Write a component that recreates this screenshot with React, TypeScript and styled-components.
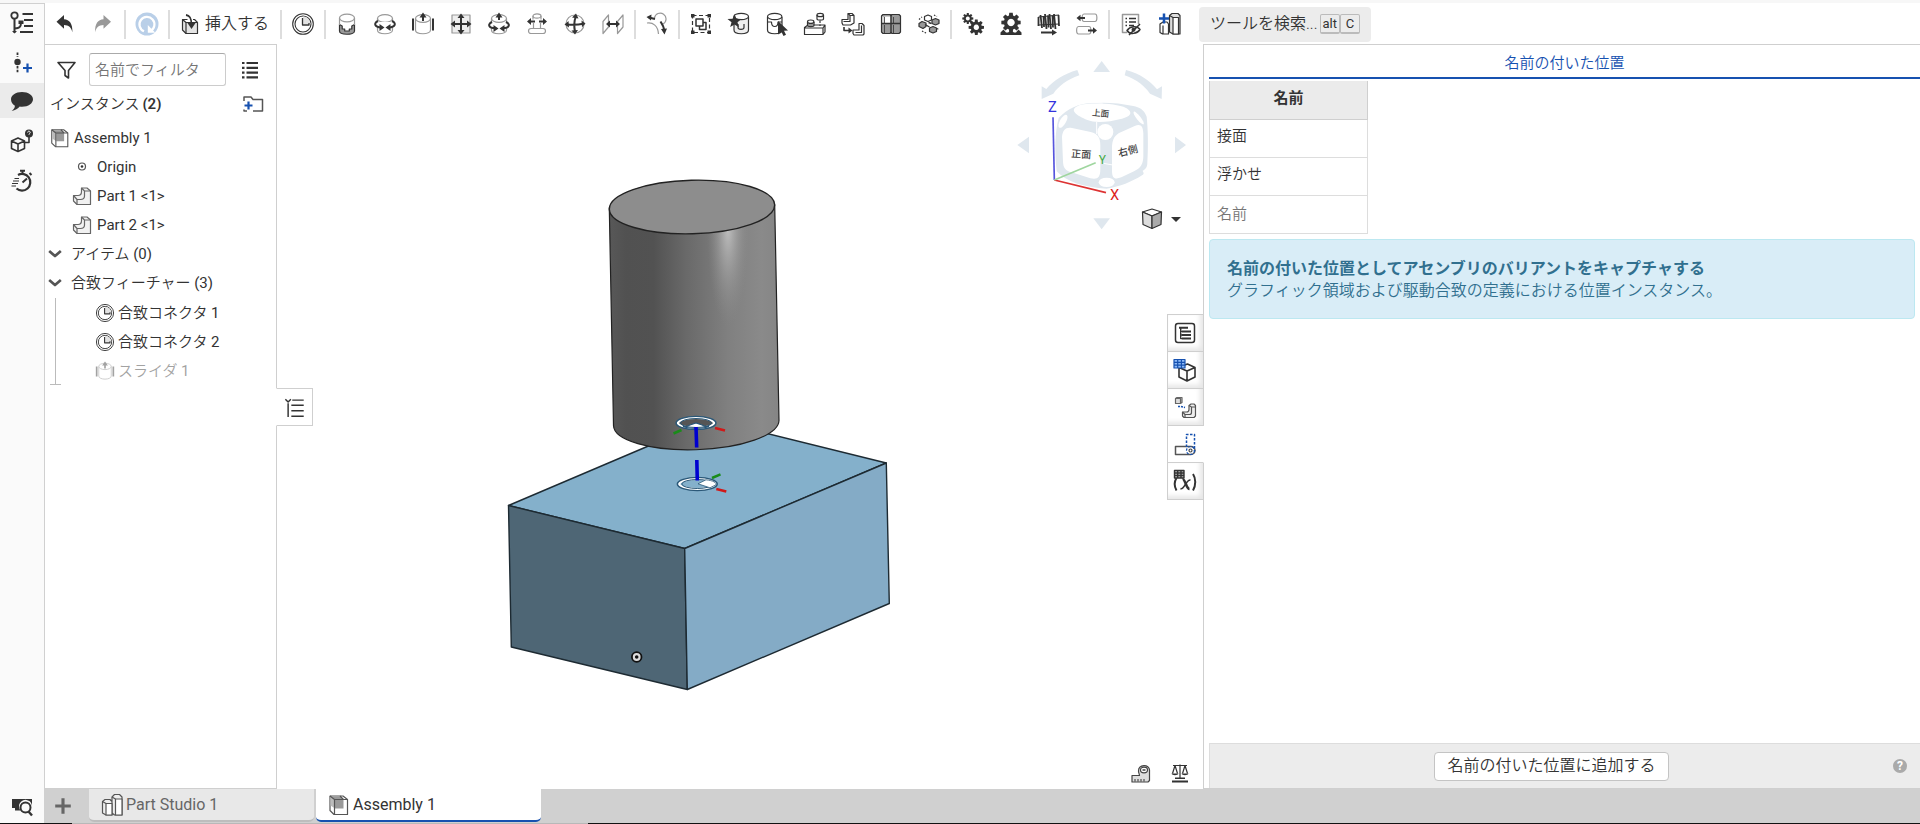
import React from "react";
import styled, { createGlobalStyle, css } from "styled-components";

const GlobalStyle = createGlobalStyle`
  *, *::before, *::after { box-sizing: border-box; }
  body {
    margin: 0;
    background: #fff;
    color: #333;
    font-family: Roboto, "Noto Sans CJK JP", sans-serif;
    font-size: 15px;
    font-weight: 350;
    line-height: 20px;
  }
  button, input { font: inherit; color: inherit; }
  button { background: none; border: 0; padding: 0; cursor: pointer; }
  h1, h2, p, ul { margin: 0; padding: 0; font: inherit; list-style: none; }
  svg { display: block; flex: none; }
`;

/* ---------- icons ---------- */

type Draw = React.ReactNode;

const Svg = styled.svg<{ $size?: number }>`
  width: ${(p) => p.$size ?? 24}px;
  height: ${(p) => p.$size ?? 24}px;
  fill: none;
  stroke: currentColor;
  stroke-width: 1.2;
  stroke-linejoin: round;
`;

const Icon = ({ draw, size }: { draw: Draw; size?: number }) => (
  <Svg viewBox="0 0 24 24" $size={size} aria-hidden="true">
    {draw}
  </Svg>
);

const solid = { fill: "currentColor", stroke: "none" };
const pale = { stroke: "#999" };

const cylinder = (
  <g {...pale}>
    <ellipse cx="12" cy="6.5" rx="7.5" ry="3.8" />
    <path d="M4.5 6.5V18c0 5 15 5 15 0V6.5" />
  </g>
);

const gearPath = (n: number, cx: number, cy: number, ro: number, ri: number) => {
  const pts: string[] = [];
  for (let i = 0; i < n; i++) {
    const a = (i / n) * Math.PI * 2;
    const w = Math.PI / n;
    [[-0.75, ri], [-0.45, ro], [0.45, ro], [0.75, ri]].forEach(([k, r]) => {
      pts.push(`${(cx + Math.sin(a + k * w) * r).toFixed(2)} ${(cy - Math.cos(a + k * w) * r).toFixed(2)}`);
    });
  }
  return `M${pts.join("L")}Z`;
};

const icons: Record<string, Draw> = {
  undo: <path {...solid} d="M3.5 9.8 11 3v4.2c5.5.3 8.700 4.300 8.400 13-1.200-4.800-3.700-7-8.400-7.200V16.800Z" />,
  redo: <path fill="#999" stroke="none" d="M20 9.8 12.5 3v4.2c-5.5.3-8.700 4.300-8.400 13 1.200-4.800 3.700-7 8.400-7.200v3.800Z" />,
  update: (
    <>
      <circle cx="12" cy="12" r="11.5" fill="#b9cfe8" stroke="none" />
      <path stroke="#fff" strokeWidth="2.2" d="M9 19.3A7.5 7.5 0 1 1 15.5 19" />
      <path fill="#fff" stroke="none" d="M12.8 13v7.8h7.5Z" />
    </>
  ),
  insert: (
    <>
      <path fill="#e4e4e4" d="M4.5 7.5 8 10.5h11.5v11H8L4.5 18Z" />
      <path d="M4.5 7.5h5M8 10.5v11M15 7.5h1.5l3 3" />
      <path strokeWidth="1.8" d="M8 3c4 .5 5.5 3 5.5 10" />
      <path {...solid} d="M9.5 11h8l-4 6Z" />
    </>
  ),
  connector: (
    <>
      <circle cx="12" cy="12" r="10.3" strokeWidth="1.1" />
      <circle cx="12" cy="12" r="8" strokeWidth="1.1" />
      <path fill="#e2e2e2" stroke="none" d="M12 4.5V12h7.5A7.5 7.5 0 0 0 12 4.5Z" />
      <path d="M11.5 6v7H18v-2" strokeWidth="1.3" />
    </>
  ),
  fastened: (
    <>
      <path fill="#999" d="M4.5 12.5V19c0 4.3 15 4.3 15 0v-6.5L16.8 14v3h-2.5v2H9.7v-2H7.2v-3Z" />
      <ellipse cx="12" cy="6" rx="7.5" ry="3.8" {...pale} />
      <path {...pale} d="M4.5 6v7M19.5 6v7" />
    </>
  ),
  revolute: (
    <>
      {cylinder}
      <path fill="#fff" stroke="none" d="M3 10h18v5H3z" />
      <path strokeWidth="2" d="M5 9C0 11.5 2 15 8 15.5M19 9c5 2.5 3 6-3 6.5" />
      <path {...solid} d="m6.5 12 5 3.5-5 3.5ZM17.5 12l-5 3.5 5 3.5Z" />
    </>
  ),
  slider: (
    <>
      {cylinder}
      <path strokeWidth="2" d="M2 6.5v12M22 6.5v12M12 9V4" />
      <path {...solid} d="m8.5 5.5 3.5-5 3.5 5Z" />
    </>
  ),
  planar: (
    <>
      <path {...pale} fill="#eee" d="M3 3h18v18H3z" />
      <path strokeWidth="2" d="M12 4v16M4 12h16" />
      <path {...solid} d="M8.5 6 12 1.5 15.5 6ZM8.5 18l3.5 4.5 3.5-4.5ZM6 8.5 1.5 12 6 15.5ZM18 8.5l4.5 3.5-4.5 3.5Z" />
    </>
  ),
  cylindrical: (
    <>
      {cylinder}
      <path fill="#fff" stroke="none" d="M3 11h18v5H3z" />
      <path strokeWidth="2" d="M5 10C0 12.5 2 16 8 16M19 10c5 2.5 3 6-3 6M12 8V4" />
      <path {...solid} d="m6.5 13 5 3.5-5 3.5ZM17.5 13l-5 3.5 5 3.5ZM8.5 5.5l3.5-5 3.5 5Z" />
    </>
  ),
  pinSlot: (
    <>
      <g {...pale}>
        <ellipse cx="12" cy="4" rx="4" ry="2.2" />
        <path d="M8 4v3.5M16 4v3.5M8.5 11v5M15.5 11v5" />
        <rect x="3.5" y="16.5" width="17" height="5" rx="2.5" />
      </g>
      <path strokeWidth="2" d="M5 9.5h5M14 9.5h5" />
      <path {...solid} d="M6 6 2 9.5 6 13ZM18 6l4 3.5-4 3.5Z" />
    </>
  ),
  ball: (
    <>
      <circle cx="12" cy="12" r="9" {...pale} />
      <path strokeWidth="2" d="M13 4c-2 5-2 11-1 16M4 12.5c6 .5 11 .5 16-.8" />
      <path {...solid} d="m9 5.5 4-4 2.5 5ZM8.5 18.5l3.5 4 3-4.5ZM5.500 9 1.500 12.500l4.500 3ZM18.500 8.500l4 3-3.500 3.800Z" />
    </>
  ),
  parallel: (
    <>
      <path {...pale} d="M2 9.5 7.5 3v12L2 21.5ZM16.5 9.5 22 3v12l-5.500 6.500Z" />
      <path strokeWidth="2" d="M7 12h10" />
      <path {...solid} d="m9 8.5-4 3.5 4 3.5ZM15 8.5l4 3.5-4 3.5Z" />
    </>
  ),
  tangent: (
    <>
      <path {...pale} d="M2 11c6-1 11 3 11.5 11M9.5 6a5.8 5.8 0 1 1 8.5 6" />
      <path strokeWidth="2" d="M4 5.5 10 7M15.5 9.5c2 3 3.5 6 3.700 9" />
      <path {...solid} d="M6.5 2.5 1.5 5 6 8.5ZM16 17l6-.5-2.5 6Z" />
    </>
  ),
  group: (
    <>
      <path strokeDasharray="4 2.5" d="M3.5 3.5h17v17h-17z" />
      <path {...solid} d="M2 2h3.5v3.5H2zM18.5 2H22v3.5h-3.5zM2 18.5h3.5V22H2zM18.5 18.5H22V22h-3.5z" />
      <path strokeWidth="1.5" d="M7 7h7v7H7zM10.5 14v3.5H17v-7h-3" />
    </>
  ),
  mate: (
    <>
      <path fill="#eee" d="M7 5v13c0 5 14.5 5 14.5 0V5" />
      <ellipse cx="14.2" cy="4.5" rx="7.3" ry="3.2" fill="#fff" />
      <path d="M11 12v3.5c0 2.5 6 2.5 6 0V12" />
      <path {...solid} d="m7.500 2 1.900 4.800 5.100.3-4 3.200 1.400 5-4.400-2.900L3.200 15l1.300-4.800-4-3.100 5.100-.3Z" />
    </>
  ),
  selectMate: (
    <>
      <path d="M2.5 5v13c0 5 14.5 5 14.5 0V5" />
      <ellipse cx="9.7" cy="4.5" rx="7.2" ry="3.2" />
      <path d="M2.5 10h4c0 6 6.5 6 6.5 0h4" />
      <path {...solid} d="m13 9 10 9.5-4 .2 2 4-2.5 1.2-2-4L13 22.5Z" />
    </>
  ),
  replicate: (
    <>
      <path d="M1.5 15.5 5 13h17v7l-2 2.5H1.5ZM1.5 16H20l2-3M20 16v6" />
      <path d="M4.5 10v3.5c0 1.5 6.5 1.5 6.500 0V10M14 3v4c0 1.500 6.500 1.500 6.500 0V3" />
      <ellipse cx="7.7" cy="9.7" rx="3.2" ry="1.7" />
      <ellipse cx="17.2" cy="3" rx="3.2" ry="1.7" />
      <path strokeDasharray="2 1.5" d="M17 9v5" />
    </>
  ),
  pattern: (
    <>
      <path fill="#fff" d="M7 1.5h4l2 2V11L9.5 13H2L1 11V7.5h6Z" />
      <path d="M9 3.5v6H2.5M7 1.5l2 2h4M18 11.5h3l2 2V22l-1 1H13l-1-1.5V18h6Z" />
      <path d="M20.5 13.5v7h-6" />
      <path strokeWidth="1.6" d="M3 15v3.5h5" />
      <path {...solid} d="m7.5 15.5 4 3-4 3Z" />
    </>
  ),
  linearPattern: (
    <>
      <path fill="#999" d="M4 2.5h7l1 1 1-1h7L21.5 4v16L20 21.5h-7l-1-1-1 1H4L2.5 20V4Z" />
      <path fill="#fff" stroke="none" d="M5.5 4.5h6V11h-6Z" />
      <path fill="#ddd" stroke="none" d="M3.2 4.3 5.5 5v6H3.2Z" />
      <path strokeWidth="1.4" d="M12 3v18M2.5 11.5h19" />
      <path strokeWidth="0.8" d="M5.5 5v6M5.5 13v8M14.5 5v6M14.5 13v8" />
    </>
  ),
  circularPattern: (
    <>
      <path fill="#999" d="m2 11.5 3-2L9 11v3.500l-3 2-4-2ZM15 8l3.500-1.500L22 8v3.500L18.500 13 15 11.500ZM12.500 16l3.500-1.500 3.500 1.500v3.500L16 21l-3.500-1.500Z" />
      <path fill="#fff" d="M7.5 4.5 11 3l3.5 1.5V8L11 9.5 7.5 8Z" />
      <path d="m8 12.5 4.500 2.500M11.500 10.500l3 1" strokeWidth="1.4" />
      <path strokeDasharray="1.5 1.5" d="M2 7.5 5 5M5 19l5 2.5M17 3l3 1.5M20 16.5l2 1" />
    </>
  ),
  gears: (
    <>
      <path {...solid} fillRule="evenodd" d={`${gearPath(8, 6.8, 6.5, 5.6, 3.9)}M6.8 4.5a2 2 0 1 0 .01 0Z`} />
      <path {...solid} fillRule="evenodd" d={`${gearPath(8, 15.3, 15.3, 7.8, 5.6)}M15.3 12.6a2.700 2.700 0 1 0 .01 0Z`} />
    </>
  ),
  rack: (
    <>
      <path {...solid} fillRule="evenodd" d={`${gearPath(8, 12, 10.5, 9.8, 7.2)}M12 6.8a3.700 3.700 0 1 0 .01 0Z`} />
      <path {...solid} d="M1.5 23v-2.5l3-3 2.5 3h2l3-2 3 2h2l2.5-3 3 3V23Z" />
    </>
  ),
  screw: (
    <>
      <path strokeWidth="1.8" d="M3.5 3 5 16M8 2l1.5 15M12.5 2 14 17M17 2l1.5 15M21.5 3 22 14M1.5 5v9M6.5 4 7 15M11 3.5l.5 12M15.5 3.5l.5 12" />
      <path strokeWidth="1.2" d="M1.5 5 22 3M1.5 13 22 12" />
      <path strokeWidth="2" d="M4 20.5h12" />
      <path {...solid} d="m15 17.5 5 3-5 3Z" />
    </>
  ),
  linear: (
    <>
      <path {...pale} d="M9 2h11c2.5 0 2.500 7.500 0 7.500H9M9 2C6.500 2 6.500 9.500 9 9.500M3.500 14.500H14M3.500 14.500c-2.500 0-2.500 7.500 0 7.500H14M14 14.500c2.500 0 2.500 7.500 0 7.500" />
      <path strokeWidth="2" d="M4 6h6M13 18.5h6" />
      <path {...solid} d="M5.5 2.800 1.500 6l4 3.200ZM18 15.300l4 3.200-4 3.200Z" />
    </>
  ),
  configList: (
    <>
      <path {...pale} strokeWidth="1.5" d="M8 20.5H3.5v-18h16V12" />
      <path strokeWidth="1.5" d="M6.5 6.5H8M10 6.5h7M6.5 10H8M10 10h7M6.5 13.5H8M10 13.5h5" />
      <path d="M8 18.5c3-4.5 10-5 13-1-3 4.5-10 5.5-13 1ZM21 12 10 23" strokeWidth="1.5" />
      <circle cx="14.5" cy="17.8" r="2" {...solid} />
    </>
  ),
  addParts: (
    <>
      <path fill="#ddd" d="M12.5 3.5 15 1.5h6l2 2V22h-7l-3.5-2Z" />
      <path fill="#fff" d="M16 5.5h5.5V22H16Z" />
      <path d="M12.5 3.5 16 5.5M3 12l3-2h4l1.5 2v10h-6L3 20.500ZM6 13.500V22" />
      <path stroke="#1651b0" strokeWidth="2.5" d="M7 1.5v10M2 6.5h10" />
    </>
  ),
  tree: (
    <>
      <circle cx="4.5" cy="4.5" r="3.2" strokeWidth="1.8" />
      <path strokeWidth="2" d="M4.5 8v13.5M5 17.5c5 0 6-2 6-6" />
      <path {...solid} d="m2 20 2.5 2.5L7 20ZM8.5 9.500h5V13h-5Z" />
      <path strokeWidth="2" d="M12.5 3H23M14 9h9M14 15h9M10 21h13" />
    </>
  ),
  addFeature: (
    <>
      <path strokeWidth="1.8" strokeDasharray="2.5 1.2" d="M7.5 1.5V6M7.5 15v6.5" />
      <circle cx="7.5" cy="11" r="3.2" {...solid} />
      <path stroke="#1651b0" strokeWidth="2.2" d="M17.5 12.5v9M13 17h9" />
    </>
  ),
  comment: <path {...solid} d="M12 3c6.500 0 11 3.300 11 7.300s-4.500 7.500-11 7.500c-.8 0-1.600 0-2.300-.2-1.600 2.200-4.500 3.900-8 4.300 2-1.500 3.200-3.200 3.200-5.200C2.500 15.200 1 13 1 10.300 1 6.300 5.500 3 12 3Z" />,
  boxHelp: (
    <>
      <path strokeWidth="1.6" d="m1.5 12 6.500-3 6.500 3v7.500L8 22.500l-6.500-3ZM1.500 12 8 15l6.500-3M8 15v7.500" />
      <circle cx="19" cy="4.5" r="4" {...solid} />
      <path strokeWidth="1.6" d="M19 8v5.5h-4" />
      <path stroke="#fff" strokeWidth="1" d="M17.7 3.500c0-2 2.800-1.500 2.500.2-.2.8-1.200.8-1.200 2" />
    </>
  ),
  stopwatch: (
    <>
      <path strokeWidth="2.2" d="M8 6a8.3 8.3 0 1 1-1.5 13.5" />
      <path strokeWidth="2" d="M10 1.8h5M12.5 2v3M19.5 4l2 2M12.5 13.5 17 9.5" />
      <path strokeWidth="1.2" d="M4.5 9.5H9M3 12h6M2 14.5h6M1.5 17H6" />
    </>
  ),
  searchTab: (
    <>
      <path {...solid} d="M2 5h20v7.5a6.5 6.5 0 1 0-11.500 4H5V14H2Z" />
      <circle cx="15.5" cy="13.5" r="5" strokeWidth="2" />
      <path strokeWidth="2.4" d="m18.5 17.5 3.5 4" />
    </>
  ),
  filter: <path strokeWidth="1.6" d="M4 4.5h17l-6.5 8V20L11 17.5v-5Z" />,
  list: (
    <>
      <path strokeWidth="2.2" d="M8.5 5H20M8.5 9.8H20M8.5 14.6H20M8.5 19.4H20" />
      <path strokeWidth="2.2" d="M4 5h2.5M4 9.8h2.5M4 14.6h2.500M4 19.4h2.500" />
    </>
  ),
  addFolder: (
    <>
      <path strokeWidth="1.5" d="M3 9V5h7l2 2.5h9.5V19H12M3 17.5V19h3" stroke="#555" />
      <path stroke="#1651b0" strokeWidth="2.2" d="M7.5 9.5v8M3.5 13.5h8" />
    </>
  ),
  assembly: (
    <g stroke="#555">
      <path fill="#fff" d="M3 3h13l4.5 3.5v15H7L3 17.5Z" />
      <path fill="#bbb" stroke="none" d="M3.500 3.500 8 6.500v9l-4.500-3Z" />
      <path fill="#999" stroke="none" d="M4 3.500h9.500l3 3v9H8v-9Z" />
      <path d="M7.5 6.5h13M7.5 6.5v15M3 3l4.5 3.5M13 3l3.5 3.5" />
    </g>
  ),
  origin: (
    <g stroke="#555">
      <circle cx="12" cy="11.5" r="3.5" />
      <circle cx="12" cy="11.5" r="1.3" {...solid} />
    </g>
  ),
  part: (
    <g stroke="#666">
      <path fill="#f1f1f1" d="M11.5 4H17l3.5 3v13.5H7L3.5 17v-5.5H8c2.300 0 3.500-1.500 3.500-4Z" />
      <path d="m11.5 4 3 3v5c0 2.500-1.500 3.500-4 3.500H7v5M3.500 11.500l3.500 4M14.500 7h6" />
    </g>
  ),
  partStudio: (
    <g stroke="#555">
      <path fill="#eee" d="M2.5 8.5 5 6.5h5l2 2V22H6l-3.5-2ZM12 4l2.5-2.5h5L22 4v18h-7.500L12 20Z" />
      <path fill="#fff" d="M6 10.5h6V22H6ZM15.5 6H22v16h-6.500Z" />
      <path d="M2.5 8.5 6 10.5M12 4l3.5 2" />
    </g>
  ),
  chevron: <path strokeWidth="3.2" stroke="#555" d="m5 8.5 7 6 7-6" />,
  plus: <path stroke="#666" strokeWidth="3.4" d="M12 3.5v17M3.5 12h17" />,
  collapseList: (
    <>
      <path strokeWidth="1.6" d="m1.5 3.5 3 3 3-3M4.5 8v15M9 4.5h12.5" />
      <path strokeWidth="1.6" d="M8 10h13.5M8 16h13.5M8 22h13.5" />
    </>
  ),
  panelBom: (
    <>
      <rect x="2.5" y="2.5" width="19" height="19" rx="2.5" strokeWidth="1.5" />
      <path strokeWidth="2" d="M6 6.8h9M9 10.400h9M9 14h9M9 17.600h9" />
      <path strokeWidth="1.4" d="M7.700 7v10.600H9M7.700 10.400H9M7.700 14H9" />
    </>
  ),
  panelConfig: (
    <>
      <path strokeWidth="1.6" d="m6 9 8.5-3L22 9.500V19l-8 4-8-4ZM6 9.500l8 3.500 8-3.500M14 13v10" />
      <path fill="#8db9f5" stroke="#1651b0" d="M1 1.500h11V10H1ZM4.700 1.500V10M8.400 1.500V10M1 4.300h11M1 7.200h11" />
    </>
  ),
  panelMove: (
    <>
      <path fill="#ddd" stroke="#666" d="m2.5 3.5 1.5-1h5v5l-1.500 1h-5ZM2.500 3.500h5v5" />
      <path fill="#eee" stroke="#555" d="M16 10.5 18 9h3l1.500 1.500V21L21 22.500H11L9.500 21v-4h4c1.700 0 2.500-1 2.500-2.500Z" />
      <path stroke="#555" d="m16 10.5 2.500 1.500v5.500c0 1-1 2-2 2H12v3M9.500 17l2.500 2.500M18.500 12h4" />
      <path stroke="#1651b0" strokeWidth="1.6" strokeDasharray="2 1" d="M5 11.5h3l4 1" />
    </>
  ),
  panelPositions: (
    <>
      <path stroke="#555" strokeWidth="1.5" d="M2.5 14.5H18a3.700 3.700 0 0 1 0 8H2.500Z" />
      <path stroke="#1651b0" strokeWidth="1.5" strokeDasharray="2.5 1.5" d="M13.5 15V2.5h8V19" />
      <circle cx="17.5" cy="18.5" r="4" stroke="#1651b0" strokeDasharray="2.5 1.5" />
      <circle cx="17.5" cy="18.5" r="1.5" stroke="#444" />
    </>
  ),
  panelVariables: (
    <>
      <path strokeWidth="2" d="M3.500 9c-2.500 4-2.500 8 0 12.500M20 5c3 4.500 3 11.500 0 16.500" />
      <path strokeWidth="2.6" d="M9.5 10.500c3-1 3.500 9.500 7 9.500" />
      <path strokeWidth="1.6" d="M7.500 19.500c3.500 2 5.500-9 10-8.500" />
      <path fill="#bbb" strokeWidth="1.4" d="M1.5 1.5H11V9H1.500ZM4.700 1.500V9M8 1.500V9M1.500 4H11M1.500 6.500H11" />
    </>
  ),
  measure: (
    <>
      <path fill="#ddd" stroke="#444" d="M9.500 10c0-7 11-7 11-1v10.500L19 21H3v-6.500h7.500C10.500 13 9.500 12 9.500 10Z" />
      <ellipse cx="15" cy="9" rx="3.5" ry="2.8" fill="#fff" stroke="#444" />
      <path strokeWidth="1.4" d="M13.5 9h3" />
      <path strokeWidth="1" d="M6 20.5V18M9 20.5V18M12 20.5V18M15 20.5V18" />
    </>
  ),
  scales: (
    <>
      <path d="M5 4.5h14M12 3.5V17M7 4.5l-2.5 8M7 4.5l2.5 8M17 4.5l-2.500 8M17 4.500l2.500 8" />
      <path {...solid} d="M3.500 12.500h7c-.5 2.300-6.500 2.300-7 0ZM13.500 12.500h7c-.5 2.300-6.500 2.300-7 0ZM7 16.500h10V18H7zM4 19.500h16v2H4z" />
    </>
  ),
  shadedCube: (
    <>
      <path fill="#fff" d="M2.5 5 12 2l9.500 3L12 9Z" />
      <path fill="#ddd" d="M2.5 5 12 9v12.5l-9-4Z" />
      <path fill="#aaa" d="M21.5 5 12 9v12.5l9-4Z" />
    </>
  ),
};

/* ---------- page frame ---------- */

const Page = styled.div`
  display: grid;
  grid-template: "rail tools" 42px "rail body" minmax(0, 1fr) "rail tabs" 34px "edge edge" 1px / 45px minmax(0, 1fr);
  height: 100vh;
  padding-top: 3px;
  background: #f7f7f7;
`;

const Rail = styled.nav`
  grid-area: rail;
  display: flex;
  flex-direction: column;
  background: #fafafa;
  border-right: 1px solid #d0d0d0;
  box-shadow: inset 0 1px #d0d0d0;
`;

const RailButton = styled.button<{ $active?: boolean; $last?: boolean }>`
  display: grid;
  place-items: center;
  height: 40px;
  ${(p) => p.$active && css`
    height: 35px;
    margin-bottom: 3px;
    background: #ebebeb;
  `}
  ${(p) => p.$last && css`
    height: 34px;
    margin-top: auto;
  `}
`;

const Toolbar = styled.header`
  grid-area: tools;
  display: flex;
  align-items: center;
  padding-left: 1px;
  background: #fff;
  overflow: hidden;
`;

const ToolButton = styled.button`
  display: grid;
  place-items: center;
  flex: none;
  width: 38px;
  height: 38px;
`;

const InsertButton = styled.button`
  display: flex;
  align-items: center;
  justify-content: center;
  gap: 3px;
  flex: none;
  width: 106px;
  height: 38px;
  padding-right: 3px;
  font-size: 16px;
`;

const Separator = styled.span`
  flex: none;
  width: 2px;
  height: 29px;
  margin: 0 2px;
  background: #ddd;
`;

const ToolSearch = styled.button`
  display: flex;
  align-items: center;
  flex: none;
  height: 35px;
  width: 172px;
  margin-left: 11px;
  padding: 0 11px;
  border-radius: 4px;
  background: #ececec;
  font-size: 16px;
  white-space: nowrap;
`;

const Key = styled.kbd`
  min-width: 20px;
  height: 20px;
  padding: 0 2px;
  border: 1px solid #bbb;
  border-bottom-width: 2px;
  border-radius: 2px;
  font: 13px/17px Roboto, sans-serif;
  text-align: center;
  &:first-of-type { margin-left: auto; }
`;

const Body = styled.div`
  grid-area: body;
  display: grid;
  grid-template-columns: 232px minmax(0, 1fr) minmax(360px, 717px);
  min-height: 0;
  background: #fff;
`;

/* ---------- instance tree ---------- */

const Side = styled.aside`
  display: flex;
  flex-direction: column;
  border: 1px solid #cfcfcf;
  border-left: 0;
  margin-top: -1px;
`;

const FilterRow = styled.div`
  display: flex;
  align-items: center;
  padding: 8px 14px 0 9px;
`;

const FilterInput = styled.input`
  width: 137px;
  height: 33px;
  margin: 0 12px 0 11px;
  padding: 0 16px 0 5px;
  border: 1px solid #ccc;
  border-top-color: #aaa;
  border-radius: 3px;
  background: #fff;
  &::placeholder { color: #757575; opacity: 1; }
`;

const IconButton = styled.button`
  display: grid;
  place-items: center;
`;

const InstancesHead = styled.div`
  display: flex;
  align-items: center;
  justify-content: space-between;
  height: 37px;
  padding: 0 11px 2px 5px;
`;

const Count = styled.b`
  margin-left: 3px;
  font-weight: 600;
`;

/* Latin runs are set in the regular weight beside the lighter Japanese. */
const Latin = styled.span`
  font-weight: 400;
`;

const TreeItem = styled.li<{ $indent: number; $muted?: boolean }>`
  display: flex;
  align-items: center;
  gap: 3px;
  height: 29px;
  padding-left: ${(p) => p.$indent}px;
  opacity: ${(p) => (p.$muted ? 0.45 : 1)};
  white-space: nowrap;
`;

const TreeHead = styled.button`
  display: flex;
  align-items: center;
  gap: 6px;
  height: 29px;
`;

const Branch = styled.ul`
  position: relative;
  margin-top: 1px;
  &::before {
    content: "";
    position: absolute;
    left: 10px;
    top: 0;
    bottom: 0;
    border-left: 1px solid #bbb;
  }
  &::after {
    content: "";
    position: absolute;
    left: 5px;
    bottom: 0;
    width: 11px;
    border-bottom: 1px solid #bbb;
  }
`;

/* ---------- graphics area ---------- */

const Viewport = styled.main`
  position: relative;
  min-width: 0;
  min-height: 0;
`;

const Scene = styled.svg`
  width: 100%;
  height: 100%;
`;

const Flyout = styled.button`
  position: absolute;
  left: -1px;
  top: 343px;
  display: grid;
  place-items: center;
  width: 37px;
  height: 38px;
  border: 1px solid #cfcfcf;
  border-left-color: #fff;
  background: #fff;
`;

const Navigator = styled.svg`
  position: absolute;
  right: 15px;
  top: 15px;
  width: 172px;
  height: 172px;
`;

const ViewStyle = styled.button`
  position: absolute;
  right: 22px;
  top: 162px;
  display: flex;
  align-items: center;
  gap: 7px;
`;

const Caret = styled.span`
  border: solid transparent;
  border-width: 5px 5px 0;
  border-top-color: #333;
`;

const PanelTabs = styled.div`
  position: absolute;
  right: -1px;
  top: 269px;
  display: flex;
  flex-direction: column;
  border: solid #cfcfcf;
  border-width: 1px 0 0 1px;
`;

const PanelTab = styled.button<{ $active?: boolean }>`
  display: grid;
  place-items: center;
  width: 36px;
  height: 37px;
  padding-right: 1px;
  border: solid #cfcfcf;
  border-width: 0 1px 1px 0;
  background: #fff;
  box-shadow: ${(p) => (p.$active ? "none" : "inset -3px -3px 5px #e6e6e6")};
  ${(p) => p.$active && css`border-right-color: #fff;`}
`;

const ViewTools = styled.div`
  position: absolute;
  right: 11px;
  bottom: 4px;
  display: flex;
  gap: 15px;
`;

/* ---------- named positions panel ---------- */

const Panel = styled.section`
  display: flex;
  flex-direction: column;
  min-width: 0;
  margin-top: -1px;
  padding-left: 5px;
  border: 1px solid #cfcfcf;
  border-right: 0;
`;

const PanelTitle = styled.h1`
  height: 34px;
  padding-top: 8px;
  border-bottom: 2px solid #1651b0;
  color: #1651b0;
  text-align: center;
`;

const Positions = styled.table`
  width: 159px;
  margin-top: 2px;
  border-collapse: collapse;
  th, td {
    height: 38px;
    padding: 0 7px 4px;
    border: 1px solid #ddd;
    text-align: left;
  }
  td:has(input) { padding-bottom: 0; }
  th {
    border-color: #cfcfcf;
    border-top: 0;
    background: #ebebeb;
    font-weight: 700;
    text-align: center;
  }
  input {
    width: 100%;
    padding: 0;
    border: 0;
    background: none;
  }
  input::placeholder { color: #757575; opacity: 1; }
`;

const Notice = styled.div`
  margin: 5px 5px 0 0;
  padding: 18px 17px 16px;
  border: 1px solid #bce8f1;
  border-radius: 4px;
  background: #d9edf7;
  color: #31708f;
  font-size: 16px;
  line-height: 22px;
  h2 { font-weight: 700; }
`;

const PanelFooter = styled.footer`
  display: flex;
  align-items: center;
  height: 45px;
  margin-top: auto;
  padding-right: 13px;
  border: solid #ddd;
  border-width: 1px 0 0 1px;
  background: #ececec;
`;

const AddButton = styled.button`
  height: 29px;
  margin: 0 auto;
  padding: 0 12px;
  border: 1px solid #c4c4c4;
  border-radius: 4px;
  background: #fff;
  font-size: 16px;
`;

const Help = styled.button`
  width: 14px;
  height: 14px;
  border-radius: 50%;
  background: #aaa;
  color: #fff;
  font-size: 12px;
  font-weight: 700;
  line-height: 14px;
`;

/* ---------- document tabs ---------- */

const Tabs = styled.footer`
  grid-area: tabs;
  display: flex;
  gap: 2px;
  background: #d0d0d0;
`;

const AddTab = styled.button`
  display: grid;
  place-items: center;
  width: 42px;
  padding-right: 6px;
`;

const Tab = styled.button<{ $active?: boolean }>`
  display: flex;
  align-items: center;
  gap: 2px;
  width: 225px;
  height: 33px;
  padding-left: 11px;
  border-radius: 0 0 5px 5px;
  border-bottom: 2px solid ${(p) => (p.$active ? "#1651b0" : "#bdbdbd")};
  background: ${(p) => (p.$active ? "#fff" : "#e8e8e8")};
  color: ${(p) => (p.$active ? "#333" : "#666")};
  font-size: 16px;
  font-weight: 400;
`;

const Edge = styled.div`
  grid-area: edge;
  background: linear-gradient(to right, #111 72px, #b8b8b8 72px, #b8b8b8 588px, #111 588px);
`;

/* ---------- data ---------- */

type Tool = [icon: string, label: string];

const mateTools: Tool[] = [
  ["fastened", "固定"],
  ["revolute", "回転"],
  ["slider", "スライダ"],
  ["planar", "平面"],
  ["cylindrical", "円筒"],
  ["pinSlot", "ピンスロット"],
  ["ball", "ボール"],
  ["parallel", "平行"],
];
const patternTools: Tool[] = [
  ["group", "グループ"],
  ["mate", "標準"],
  ["selectMate", "選択"],
  ["replicate", "複製"],
  ["pattern", "スナップ"],
  ["linearPattern", "直線パターン"],
  ["circularPattern", "円形パターン"],
];
const relationTools: Tool[] = [
  ["gears", "ギア"],
  ["rack", "ラック"],
  ["screw", "ねじ"],
  ["linear", "直線関係"],
];
const viewTools: Tool[] = [
  ["configList", "表示状態"],
  ["addParts", "パーツを追加"],
];
const railTools: Tool[] = [
  ["tree", "ツリー"],
  ["addFeature", "バージョン"],
  ["comment", "コメント"],
  ["boxHelp", "ヘルプ"],
  ["stopwatch", "パフォーマンス"],
];
const panelTools: Tool[] = [
  ["panelBom", "部品表"],
  ["panelConfig", "コンフィギュレーション"],
  ["panelMove", "表示"],
  ["panelPositions", "名前の付いた位置"],
  ["panelVariables", "変数"],
];

const ToolGroup = ({ tools }: { tools: Tool[] }) => (
  <>
    {tools.map(([icon, label]) => (
      <ToolButton key={icon} aria-label={label}>
        <Icon draw={icons[icon]} />
      </ToolButton>
    ))}
  </>
);

/* ---------- drawings ---------- */

const Model = () => (
  <Scene viewBox="277 45 926 744" role="img" aria-label="Assembly 1">
    <defs>
      <linearGradient id="side">
        <stop offset="0" stopColor="#585858" />
        <stop offset="0.1" stopColor="#515151" />
        <stop offset="0.26" stopColor="#525252" />
        <stop offset="0.45" stopColor="#696969" />
        <stop offset="0.7" stopColor="#808080" />
        <stop offset="0.9" stopColor="#8a8a8a" />
        <stop offset="1" stopColor="#858585" />
      </linearGradient>
      <radialGradient id="shine" gradientTransform="translate(728 226) scale(21 100)" gradientUnits="userSpaceOnUse" cx="0" cy="0" r="1">
        <stop offset="0" stopColor="#c8c8c8" stopOpacity="0.9" />
        <stop offset="0.5" stopColor="#b0b0b0" stopOpacity="0.4" />
        <stop offset="1" stopColor="#909090" stopOpacity="0" />
      </radialGradient>
    </defs>
    <g stroke="#1d2a32" strokeWidth="1.4" strokeLinejoin="round">
      <path fill="#84b0cb" d="M508.5 505.5 710.7 419.5 886.3 463 684.7 548.500Z" />
      <path fill="#4e6675" d="M508.5 505.5 684.7 548.5 687.300 689.500 511.300 647Z" />
      <path fill="#84abc6" d="M684.7 548.5 886.300 463 889.300 603.500 687.300 689.500Z" />
    </g>
    <path fill="url(#side)" stroke="#222" strokeWidth="1.2" d="M609.300 208 613.500 425.500A82.800 27 -2 0 0 779 420.500L774.700 205Z" />
    <path fill="url(#shine)" d="M700 226h60v110h-60z" />
    <ellipse cx="692" cy="207" rx="82.7" ry="26.8" transform="rotate(-1.5 692 207)" fill="#8d8d8d" stroke="#222" strokeWidth="1.4" />

    <ellipse cx="696" cy="423" rx="18" ry="5.2" fill="#555" stroke="#fff" strokeWidth="2.4" />
    <ellipse cx="696" cy="423" rx="20" ry="6.6" fill="none" stroke="#2b5878" strokeWidth="1.4" />
    <path fill="#fff" stroke="#2b5878" strokeWidth="1.2" d="M683 426.500c3 .5 5-.5 7-1.500l6-2 6 2c2 1 4 2 7 1.500-5 2.500-21 2.500-26 0Z" />
    <ellipse cx="696" cy="423" rx="15.5" ry="4.5" fill="none" stroke="#2b5878" />

    <ellipse cx="697.3" cy="484" rx="18" ry="5.2" fill="#84b0cb" stroke="#fff" strokeWidth="2.4" />
    <ellipse cx="697.3" cy="484" rx="20" ry="6.6" fill="none" stroke="#2b5878" strokeWidth="1.4" />
    <ellipse cx="697.3" cy="484" rx="15.5" ry="4.5" fill="none" stroke="#2b5878" />
    <path fill="#fff" stroke="#2b5878" strokeWidth="0.8" d="m698 483.800 8-4c7 .7 11 3 10 5l-6 3Z" />

    <g fill="none" strokeWidth="3.6">
      <path stroke="#0000d0" d="m696 427 .7 20.500M696.800 460l.5 20.500" />
      <path stroke="#d01818" strokeWidth="2.5" d="m715 428 10 2.500M716.300 489l10 2.500" />
      <path stroke="#1a8c1a" strokeWidth="2.5" d="m673.500 433.500 8-3.500M712 478l8.500-3.700" />
    </g>
    <circle cx="636.7" cy="657" r="4.8" fill="#ddd" stroke="#111" strokeWidth="1.8" />
    <circle cx="636.7" cy="657" r="1.8" fill="#111" />
  </Scene>
);

const ViewCube = () => (
  <Navigator viewBox="48 60 516 516" role="img" aria-label="ビューキューブ">
    <g fill="#dfe7ee">
      <path d="m305 63 25 33h-50ZM305 568l25-33h-50ZM52 315l35-25v50ZM558 315l-33-25v50Z" />
      <path d="m232 90 6 16c-38 14-62 32-78 55l-35 16v-38l14 8c22-26 52-45 93-57ZM378 90l-4 16c38 14 60 32 76 55l35 16 1-38-15 9c-22-27-52-47-93-58Z" />
      <path d="M272 189c-35 2-70 17-96 45-12 45-12 100-6 160 30 32 80 48 150 52 40-6 75-20 106-40 10-6 2-10 2-14 8-4 14-10 14-24 3-50 2-100-2-138-8-22-22-28-40-32-40-9-80-12-128-9Z" />
    </g>
    <g fill="#fff">
      <path d="M238 196c20-8 110-8 140 8 24 14 12 26-12 32-40 10-80 14-104 4-30-12-60-30-24-44Z" />
      <path d="M186 290c2-20 12-30 30-26l56 12c22 5 29 18 29 40v72c0 24-8 32-30 27l-56-18c-20-6-25-14-26-32Z" />
      <path d="M336 326c0-28 8-42 28-50l40-18c18-8 25 0 26 22v68c0 24-8 36-28 46l-38 18c-20 8-28 2-28-20Z" />
      <circle cx="316" cy="276" r="24" />
      <ellipse cx="320" cy="427" rx="24" ry="14" />
      <ellipse cx="189" cy="244" rx="9" ry="22" transform="rotate(30 189 244)" />
      <ellipse cx="416" cy="234" rx="6" ry="24" transform="rotate(-38 416 234)" />
    </g>
    <path stroke="#fff" strokeWidth="3" d="M290 246v36M310 370l28 5M270 186l38 3" />
    <g fontFamily="Roboto, 'Noto Sans CJK JP', sans-serif" fontSize="30" fontWeight="500" fill="#444" textAnchor="middle">
      <text x="302" y="229" fontSize="26" transform="rotate(6 302 220)">上面</text>
      <text x="244" y="353" transform="rotate(4 244 343)">正面</text>
      <text x="384" y="343" transform="rotate(-14 384 333)">右側</text>
    </g>
    <g strokeWidth="5" fill="none">
      <path stroke="#5555dd" d="m159 232 4 188" />
      <path stroke="#dd3333" d="m163 420 155 38" />
      <path stroke="#9fd69f" d="m163 420 124-52" />
    </g>
    <g fontFamily="Roboto, sans-serif" fontSize="44" fontWeight="400" textAnchor="middle">
      <text x="157" y="217" fill="#3333dd">Z</text>
      <text x="344" y="480" fill="#dd2222">X</text>
      <text x="307" y="372" fontSize="36" fill="#44aa44">Y</text>
    </g>
  </Navigator>
);

/* ---------- app ---------- */

export default function App() {
  return (
    <>
      <GlobalStyle />
      <Page>
        <Rail>
          {railTools.map(([icon, label]) => (
            <RailButton key={icon} aria-label={label} $active={icon === "comment"}>
              <Icon draw={icons[icon]} />
            </RailButton>
          ))}
          <RailButton $last aria-label="タブマネージャー">
            <Icon draw={icons.searchTab} />
          </RailButton>
        </Rail>

        <Toolbar>
          <ToolGroup tools={[["undo", "元に戻す"], ["redo", "やり直し"]]} />
          <Separator />
          <ToolGroup tools={[["update", "更新"]]} />
          <Separator />
          <InsertButton>
            <Icon draw={icons.insert} />
            挿入する
          </InsertButton>
          <Separator />
          <ToolGroup tools={[["connector", "合致コネクタ"]]} />
          <Separator />
          <ToolGroup tools={mateTools} />
          <Separator />
          <ToolGroup tools={[["tangent", "正接"]]} />
          <Separator />
          <ToolGroup tools={patternTools} />
          <Separator />
          <ToolGroup tools={relationTools} />
          <Separator />
          <ToolGroup tools={viewTools} />
          <ToolSearch>
            ツールを検索...
            <Key>alt</Key>
            <Key>C</Key>
          </ToolSearch>
        </Toolbar>

        <Body>
          <Side>
            <FilterRow>
              <Icon draw={icons.filter} />
              <FilterInput aria-label="名前でフィルタ" placeholder="名前でフィルタ" />
              <IconButton aria-label="リスト表示">
                <Icon draw={icons.list} />
              </IconButton>
            </FilterRow>
            <InstancesHead>
              <span>
                インスタンス<Count>(2)</Count>
              </span>
              <IconButton aria-label="フォルダを追加">
                <Icon draw={icons.addFolder} />
              </IconButton>
            </InstancesHead>
            <ul>
              <TreeItem $indent={4}><Icon draw={icons.assembly} size={22} /><Latin>Assembly 1</Latin></TreeItem>
              <TreeItem $indent={25}><Icon draw={icons.origin} /><Latin>Origin</Latin></TreeItem>
              <TreeItem $indent={25}><Icon draw={icons.part} /><Latin>Part 1 &lt;1&gt;</Latin></TreeItem>
              <TreeItem $indent={25}><Icon draw={icons.part} /><Latin>Part 2 &lt;1&gt;</Latin></TreeItem>
            </ul>
            <TreeHead><Icon draw={icons.chevron} size={20} /><span>アイテム <Latin>(0)</Latin></span></TreeHead>
            <TreeHead><Icon draw={icons.chevron} size={20} /><span>合致フィーチャー <Latin>(3)</Latin></span></TreeHead>
            <Branch>
              <TreeItem $indent={50}><Icon draw={icons.connector} size={20} /><span>合致コネクタ <Latin>1</Latin></span></TreeItem>
              <TreeItem $indent={50}><Icon draw={icons.connector} size={20} /><span>合致コネクタ <Latin>2</Latin></span></TreeItem>
              <TreeItem $indent={50} $muted><Icon draw={icons.slider} size={20} /><span>スライダ <Latin>1</Latin></span></TreeItem>
            </Branch>
          </Side>

          <Viewport>
            <Model />
            <Flyout aria-label="リストを折りたたむ"><Icon draw={icons.collapseList} size={22} /></Flyout>
            <ViewCube />
            <ViewStyle aria-label="表示スタイル"><Icon draw={icons.shadedCube} /><Caret /></ViewStyle>
            <PanelTabs>
              {panelTools.map(([icon, label]) => (
                <PanelTab key={icon} aria-label={label} $active={icon === "panelPositions"}>
                  <Icon draw={icons[icon]} />
                </PanelTab>
              ))}
            </PanelTabs>
            <ViewTools>
              <IconButton aria-label="測定"><Icon draw={icons.measure} /></IconButton>
              <IconButton aria-label="質量特性"><Icon draw={icons.scales} /></IconButton>
            </ViewTools>
          </Viewport>

          <Panel>
            <PanelTitle>名前の付いた位置</PanelTitle>
            <Positions>
              <thead>
                <tr><th scope="col">名前</th></tr>
              </thead>
              <tbody>
                <tr><td>接面</td></tr>
                <tr><td>浮かせ</td></tr>
                <tr><td><input aria-label="名前" placeholder="名前" /></td></tr>
              </tbody>
            </Positions>
            <Notice>
              <h2>名前の付いた位置としてアセンブリのバリアントをキャプチャする</h2>
              <p>グラフィック領域および駆動合致の定義における位置インスタンス。</p>
            </Notice>
            <PanelFooter>
              <AddButton>名前の付いた位置に追加する</AddButton>
              <Help aria-label="ヘルプ">?</Help>
            </PanelFooter>
          </Panel>
        </Body>

        <Tabs>
          <AddTab aria-label="タブを追加"><Icon draw={icons.plus} size={22} /></AddTab>
          <Tab><Icon draw={icons.partStudio} />Part Studio 1</Tab>
          <Tab $active><Icon draw={icons.assembly} />Assembly 1</Tab>
        </Tabs>
        <Edge />
      </Page>
    </>
  );
}
